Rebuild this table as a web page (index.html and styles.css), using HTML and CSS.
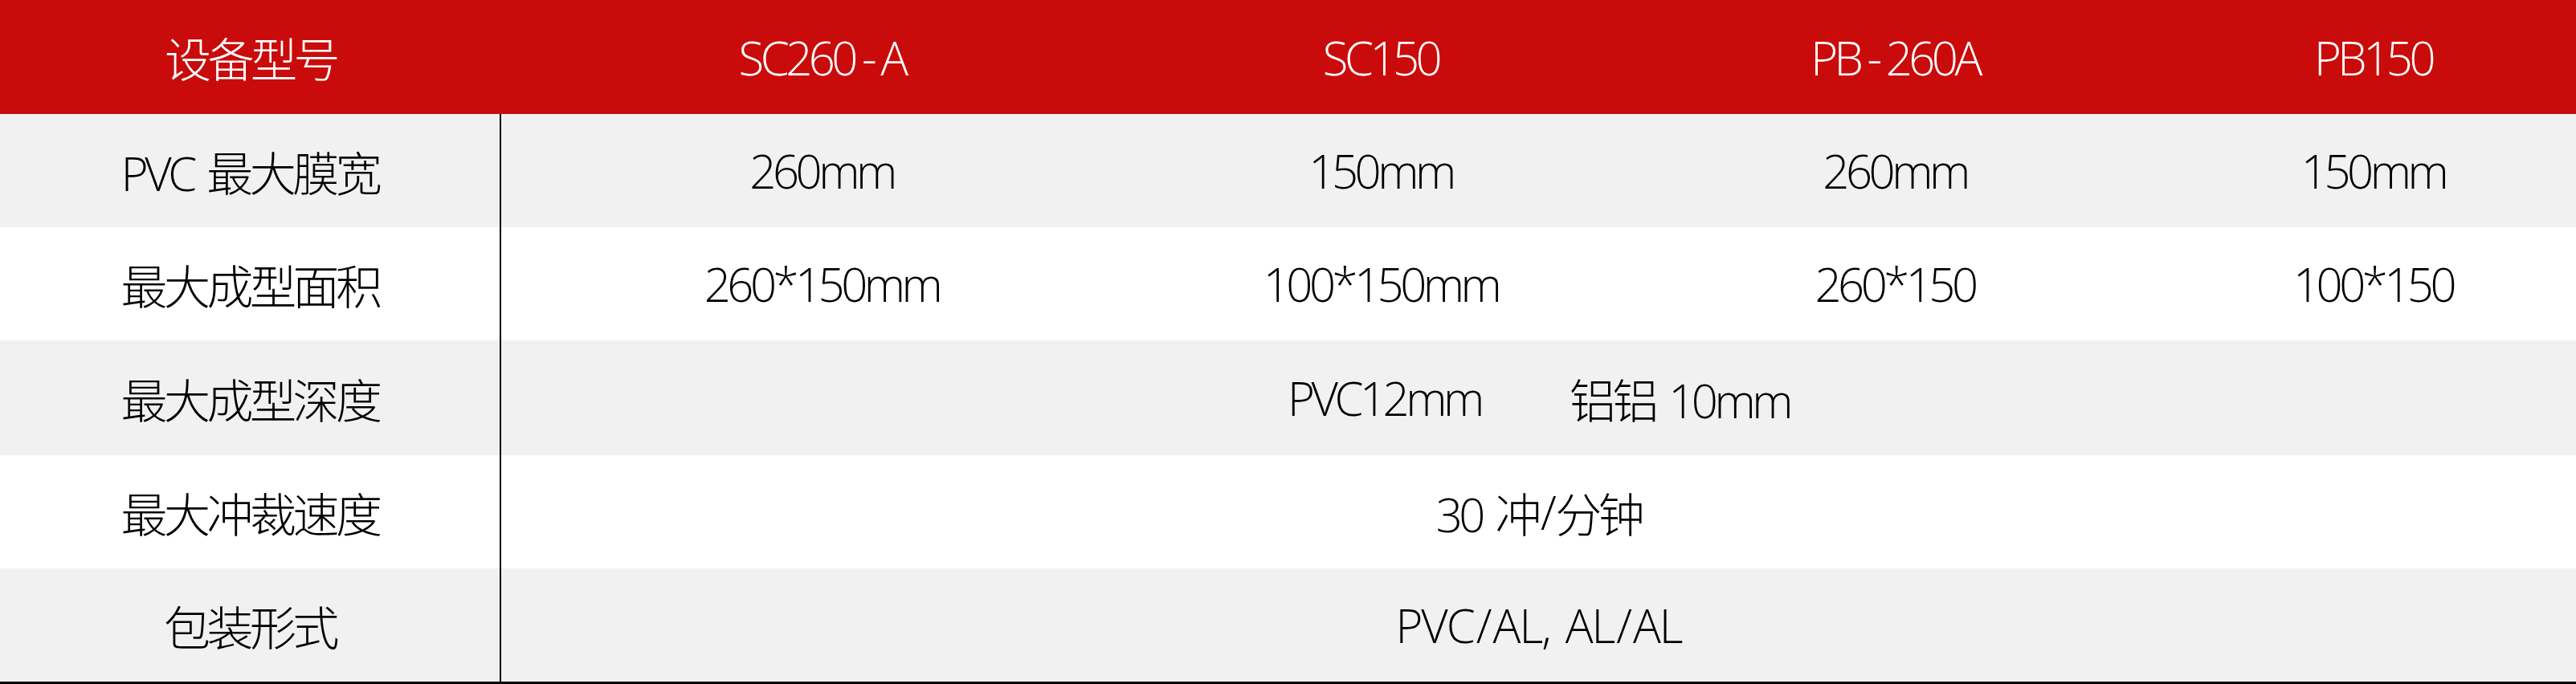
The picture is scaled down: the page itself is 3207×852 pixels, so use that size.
FILE: index.html
```html
<!DOCTYPE html>
<html lang="zh-CN">
<head>
<meta charset="utf-8">
<title>设备型号参数</title>
<link rel="stylesheet" href="styles.css">
</head>
<body>
<div class="spec">
  <div class="row head">
    <div class="cell c0">设备型号</div>
    <div class="cell">SC260<span class="dash">-</span>A</div>
    <div class="cell">SC150</div>
    <div class="cell">PB<span class="dash">-</span>260A</div>
    <div class="cell">PB150</div>
  </div>
  <div class="row alt">
    <div class="cell c0">PVC 最大膜宽</div>
    <div class="cell">260mm</div>
    <div class="cell">150mm</div>
    <div class="cell">260mm</div>
    <div class="cell">150mm</div>
  </div>
  <div class="row">
    <div class="cell c0">最大成型面积</div>
    <div class="cell">260*150mm</div>
    <div class="cell">100*150mm</div>
    <div class="cell">260*150</div>
    <div class="cell">100*150</div>
  </div>
  <div class="row alt tall">
    <div class="cell c0">最大成型深度</div>
    <div class="cell span">PVC12mm<span class="gap"></span>铝铝 10mm</div>
  </div>
  <div class="row">
    <div class="cell c0">最大冲裁速度</div>
    <div class="cell span">30 冲<span class="slash">/</span>分钟</div>
  </div>
  <div class="row alt">
    <div class="cell c0">包装形式</div>
    <div class="cell span loose">PVC<span class="slash">/</span>AL, AL<span class="slash">/</span>AL</div>
  </div>
</div>
</body>
</html>
```

FILE: styles.css
```css
html, body {
  margin: 0;
  padding: 0;
  background: #ffffff;
}

.spec {
  width: 3207px;
  border-bottom: 3px solid #000;
  font-family: "Open Sans", "Noto Sans CJK SC", sans-serif;
  font-weight: 300;
  font-size: 58px;
  letter-spacing: -4.5px;
  word-spacing: 6px;
  color: #000;
}

.row {
  display: grid;
  grid-template-columns: 624px 798px 594px 686px 1fr;
  height: 141px;
  background: #ffffff;
}

.row.alt {
  background: #f1f1f1;
}

.row.tall {
  height: 143px;
}

.row.head {
  height: 142px;
  background: #ca0b0b;
  color: #ffffff;
}

.cell {
  display: flex;
  align-items: center;
  justify-content: center;
  white-space: pre;
  box-sizing: border-box;
}

.row .c0 {
  border-right: 2px solid #000;
}

.row.head .c0 {
  border-right: none;
}

.span {
  grid-column: 2 / -1;
}

.loose {
  letter-spacing: -2px;
}

.dash {
  margin: 0 9px;
}

.slash {
  margin: 0 3px;
}

.gap {
  display: inline-block;
  width: 110px;
}
```
